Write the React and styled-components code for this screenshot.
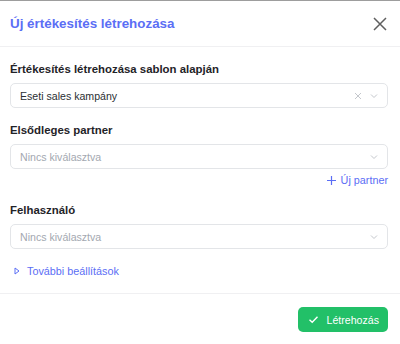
import styled, { createGlobalStyle } from "styled-components";

const Global = createGlobalStyle`
  html, body {
    margin: 0;
    padding: 0;
    background: #ffffff;
    font-family: "Liberation Sans", Arial, sans-serif;
  }
  * { box-sizing: border-box; }
`

const SelectField = ({ value, placeholder, clearable }) => (
    <SelectBox>
        <SelectValue $empty={!value}>{value || placeholder}</SelectValue>
        <SelectIcons>
            {clearable && (
                <svg width="10" height="10" viewBox="0 0 10 10">
                    <path d="M2 2 L8 8 M8 2 L2 8" stroke="#c4c7cc" strokeWidth="1" fill="none" />
                </svg>
            )}
            <svg width="10" height="10" viewBox="0 0 10 10">
                <path d="M2 3.5 L5 6.5 L8 3.5" stroke="#c4c7cc" strokeWidth="1" fill="none" />
            </svg>
        </SelectIcons>
    </SelectBox>
)

const App = () => {
    return (
        <>
            <Global />
            <Modal>
                <Header>
                    <Title>Új értékesítés létrehozása</Title>
                    <CloseButton>
                        <svg width="14" height="14" viewBox="0 0 14 14">
                            <path d="M1 1 L13 13 M13 1 L1 13" stroke="#5f5f5f" strokeWidth="1.5" fill="none" />
                        </svg>
                    </CloseButton>
                </Header>
                <Body>
                    <Label>Értékesítés létrehozása sablon alapján</Label>
                    <SelectField value="Eseti sales kampány" clearable />

                    <Label>Elsődleges partner</Label>
                    <SelectField placeholder="Nincs kiválasztva" />
                    <LinkRow>
                        <LinkButton>
                            <svg width="11" height="11" viewBox="0 0 11 11">
                                <path d="M5.5 1 V10 M1 5.5 H10" stroke="#5b6ef5" strokeWidth="1.2" fill="none" />
                            </svg>
                            Új partner
                        </LinkButton>
                    </LinkRow>

                    <Label $afterLink>Felhasználó</Label>
                    <SelectField placeholder="Nincs kiválasztva" />

                    <MoreSettings>
                        <svg width="8" height="8" viewBox="0 0 8 8">
                            <path d="M2 1 L6 4 L2 7 Z" stroke="#5b6ef5" strokeWidth="1" fill="none" strokeLinejoin="round" />
                        </svg>
                        További beállítások
                    </MoreSettings>
                </Body>
                <Footer>
                    <SubmitButton>
                        <svg width="11" height="11" viewBox="0 0 11 11">
                            <path d="M1.5 5.8 L4.2 8.3 L9.5 2.8" stroke="#ffffff" strokeWidth="1.4" fill="none" />
                        </svg>
                        Létrehozás
                    </SubmitButton>
                </Footer>
            </Modal>
        </>
    )
}

const Modal = styled.div`
    width: 400px;
    height: 344px;
    border-top: 1px solid #9d9d9d;
    background: #fff;
    display: flex;
    flex-direction: column;
`
const Header = styled.div`
    height: 46px;
    padding: 0 10px;
    display: flex;
    align-items: center;
    justify-content: space-between;
    border-bottom: 1px solid #f0f0f2;
`
const Title = styled.h2`
    margin: 0;
    font-size: 13.4px;
    font-weight: 700;
    color: #5b6ef5;
`
const CloseButton = styled.div`
    width: 16px;
    height: 16px;
    display: flex;
    align-items: center;
    justify-content: center;
    margin-right: 2px;
`
const Body = styled.div`
    flex: 1;
    padding: 14px 12px 0 10px;
    display: flex;
    flex-direction: column;
`
const Label = styled.div`
    font-size: 11.4px;
    font-weight: 700;
    line-height: 16px;
    color: #1f2328;
    margin-bottom: 6px;
    margin-top: ${p => (p.$afterLink ? "15px" : "14px")};
    &:first-child { margin-top: 0; }
`
const SelectBox = styled.div`
    height: 25px;
    border: 1px solid #e3e5e8;
    border-radius: 5px;
    padding: 0 8px 0 9px;
    display: flex;
    align-items: center;
    justify-content: space-between;
`
const SelectValue = styled.span`
    font-size: 10.6px;
    color: ${p => (p.$empty ? "#a3a8b0" : "#2b2f33")};
`
const SelectIcons = styled.div`
    display: flex;
    gap: 6px;
    align-items: center;
`
const LinkRow = styled.div`
    display: flex;
    justify-content: flex-end;
    margin-top: 4px;
`
const LinkButton = styled.span`
    display: flex;
    align-items: center;
    gap: 4px;
    font-size: 10.8px;
    line-height: 14px;
    color: #5b6ef5;
`
const MoreSettings = styled.div`
    margin-top: 15px;
    display: flex;
    align-items: center;
    gap: 6px;
    padding-left: 3px;
    font-size: 10.8px;
    line-height: 14px;
    color: #5b6ef5;
`
const Footer = styled.div`
    height: 51px;
    border-top: 1px solid #f0f0f2;
    display: flex;
    align-items: center;
    justify-content: flex-end;
    padding: 0 12px 0 10px;
`
const SubmitButton = styled.button`
    height: 25px;
    padding: 0 9px 0 10px;
    border: none;
    border-radius: 5px;
    background: #22c068;
    color: #fff;
    font-family: inherit;
    font-size: 10.6px;
    display: flex;
    align-items: center;
    gap: 8px;
    margin-top: 1px;
`

export default App
